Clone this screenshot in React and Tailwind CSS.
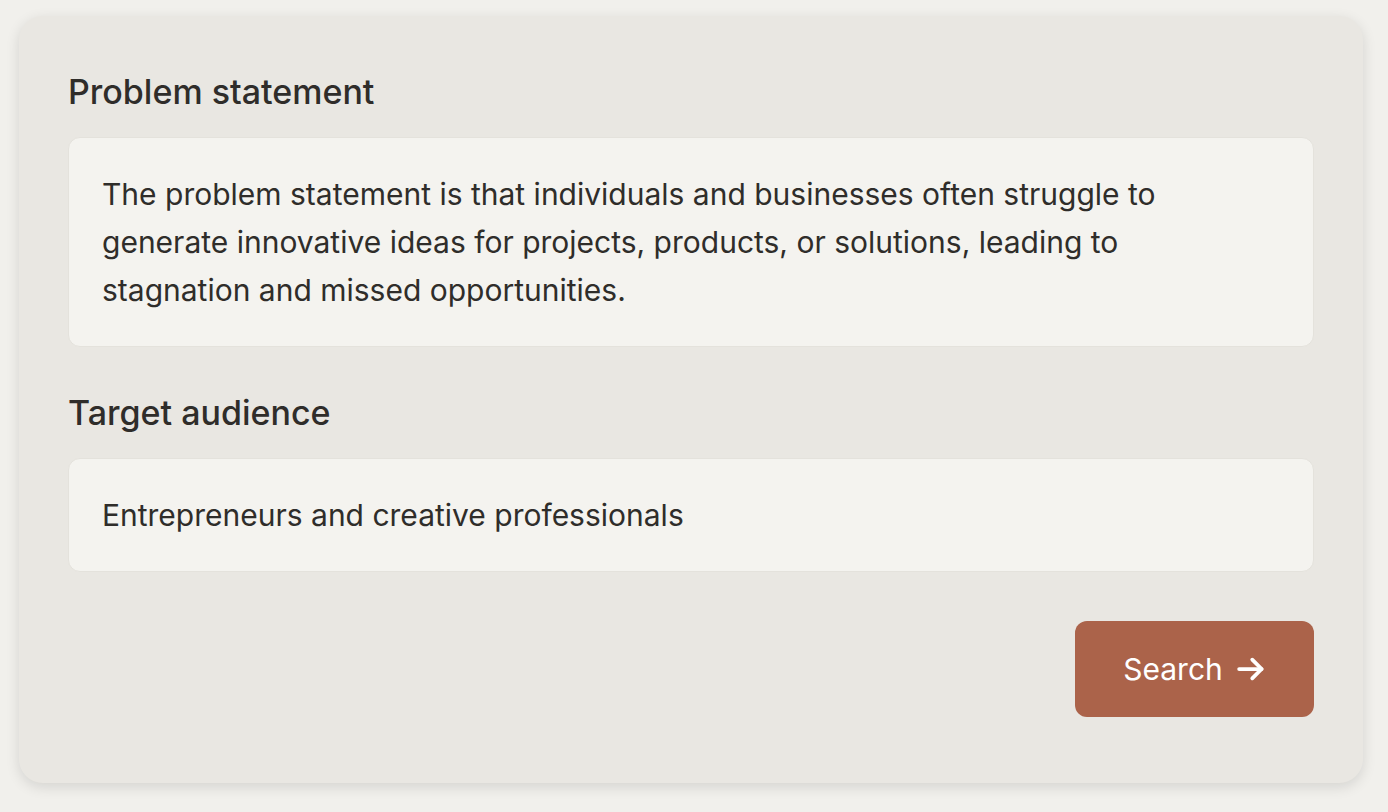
import React from "react";

const Field = ({ label, children, className }) => (
  <div className={className}>
    <h2 className="text-[34px] leading-[40px] font-medium text-[#2f2d2a]">{label}</h2>
    <div className="mt-[25px] rounded-xl border border-[#e4e2dc] bg-[#f4f3ef] px-[33px] py-8 text-[30px] leading-[48px] text-[#2f2d2a]">
      {children}
    </div>
  </div>
);

export default function App() {
  return (
    <div
      className="min-h-screen bg-[#f1f0ec] pl-[19px] pr-[25px] pt-4"
      style={{ fontFamily: "Inter, 'Noto Sans', sans-serif" }}
    >
      <div className="rounded-3xl bg-[#e9e7e2] px-[49px] pt-[56px] pb-[66px] shadow-[0_4px_14px_rgba(0,0,0,0.12)]">
        <Field label="Problem statement">
          The problem statement is that individuals and businesses often struggle to
          <br />
          generate innovative ideas for projects, products, or solutions, leading to
          <br />
          stagnation and missed opportunities.
        </Field>
        <Field label="Target audience" className="mt-[46px]">
          Entrepreneurs and creative professionals
        </Field>
        <div className="mt-[49px] flex justify-end">
          <button className="flex h-[96px] w-[239px] items-center justify-center gap-[13px] rounded-xl bg-[#ab634a] text-[30px] text-white">
            Search
            <svg width="30" height="30" viewBox="0 0 24 24" fill="none" stroke="currentColor" strokeWidth="3" strokeLinecap="round" strokeLinejoin="round">
              <path d="M2.5 12h18" />
              <path d="M13 4.5l7.5 7.5-7.5 7.5" />
            </svg>
          </button>
        </div>
      </div>
    </div>
  );
}
